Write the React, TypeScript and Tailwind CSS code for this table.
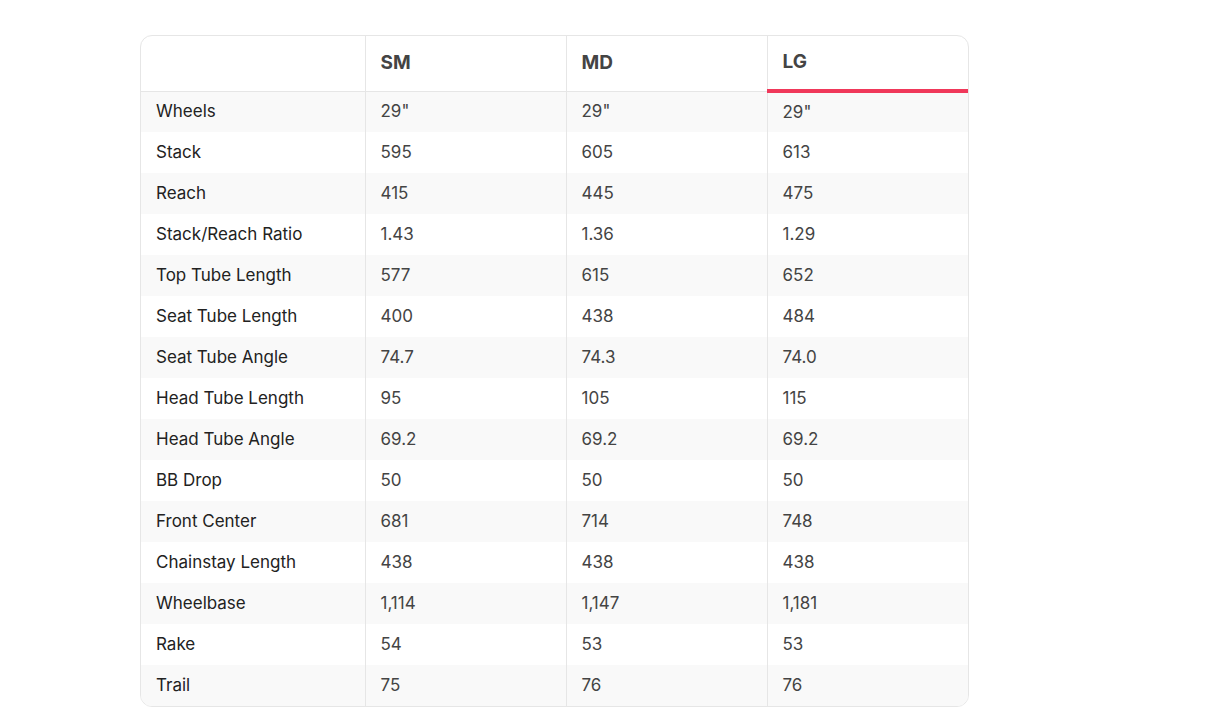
const sizes = ["SM", "MD", "LG"]

const rows: [string, string, string, string][] = [
  ["Wheels", '29"', '29"', '29"'],
  ["Stack", "595", "605", "613"],
  ["Reach", "415", "445", "475"],
  ["Stack/Reach Ratio", "1.43", "1.36", "1.29"],
  ["Top Tube Length", "577", "615", "652"],
  ["Seat Tube Length", "400", "438", "484"],
  ["Seat Tube Angle", "74.7", "74.3", "74.0"],
  ["Head Tube Length", "95", "105", "115"],
  ["Head Tube Angle", "69.2", "69.2", "69.2"],
  ["BB Drop", "50", "50", "50"],
  ["Front Center", "681", "714", "748"],
  ["Chainstay Length", "438", "438", "438"],
  ["Wheelbase", "1,114", "1,147", "1,181"],
  ["Rake", "54", "53", "53"],
  ["Trail", "75", "76", "76"],
]

const App = () => {
  return (
    <div className="w-[1214px] h-[726px] bg-white pt-[35px] pl-[140px] font-['Inter',sans-serif] text-[#333]">
      <div className="w-[829px] border border-[#e6e6e6] rounded-[12px] overflow-hidden">
        <table className="w-full border-collapse table-fixed">
          <colgroup>
            <col className="w-[224px]" />
            <col className="w-[201px]" />
            <col className="w-[201px]" />
            <col />
          </colgroup>
          <thead>
            <tr className="h-[55px] border-b border-[#e6e6e6]">
              <th className="border-r border-[#e6e6e6]"></th>
              {sizes.map((s, i) => (
                <th
                  key={s}
                  className={
                    "text-left pl-[15px] text-[19px] font-bold text-[#444] " +
                    (i < 2 ? "border-r border-[#e6e6e6]" : "border-b-4 border-b-[#f0385a]")
                  }
                >
                  {s}
                </th>
              ))}
            </tr>
          </thead>
          <tbody>
            {rows.map((r, i) => (
              <tr key={r[0]} className={"h-[41px] " + (i % 2 === 0 ? "bg-[#f9f9f9]" : "bg-white")}>
                <td className="pl-[15px] text-[17px] text-[#222] border-r border-[#e6e6e6]">{r[0]}</td>
                <td className="pl-[15px] text-[17px] text-[#444] border-r border-[#e6e6e6]">{r[1]}</td>
                <td className="pl-[15px] text-[17px] text-[#444] border-r border-[#e6e6e6]">{r[2]}</td>
                <td className="pl-[15px] text-[17px] text-[#444]">{r[3]}</td>
              </tr>
            ))}
          </tbody>
        </table>
      </div>
    </div>
  )
}

export default App
